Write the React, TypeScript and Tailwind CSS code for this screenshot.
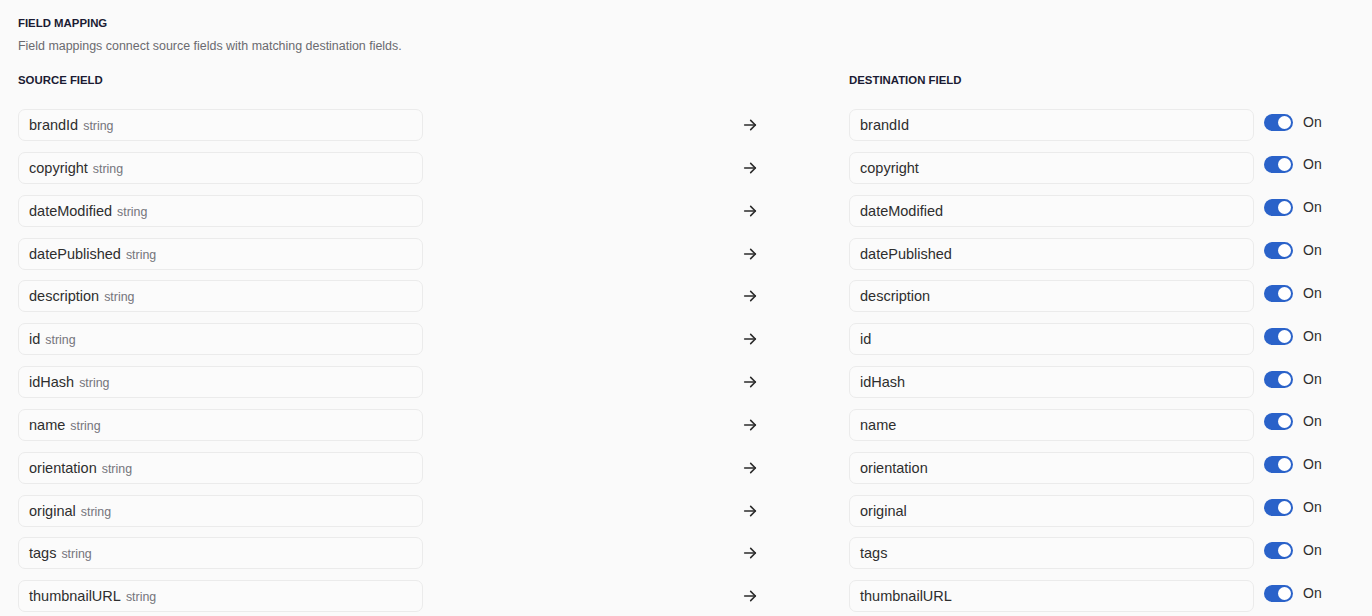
import React from "react";

const fields = [
  "brandId",
  "copyright",
  "dateModified",
  "datePublished",
  "description",
  "id",
  "idHash",
  "name",
  "orientation",
  "original",
  "tags",
  "thumbnailURL",
];

function Arrow() {
  return (
    <svg width="16" height="16" viewBox="0 0 24 24" fill="none" stroke="#2b2b2b" strokeWidth="2.4" strokeLinecap="round" strokeLinejoin="round">
      <path d="M4 12h16" />
      <path d="M13 5l7 7-7 7" />
    </svg>
  );
}

function Toggle() {
  return (
    <div className="w-[29px] h-[17px] rounded-full bg-[#2a62c9] flex items-center justify-end pr-[2px]">
      <div className="w-[13px] h-[13px] rounded-full bg-white" />
    </div>
  );
}

export default function App() {
  return (
    <div
      className="min-h-[616px] bg-[#fafafa] px-[18px] pt-[17px] text-[#2b2b2b]"
      style={{ fontFamily: '"Liberation Sans", Arial, sans-serif' }}
    >
      <div className="text-[11.4px] leading-[13px] font-bold text-[#1b1b33]">FIELD MAPPING</div>
      <div className="mt-[9px] text-[12.45px] leading-[14px] text-[#6a6a70]">
        Field mappings connect source fields with matching destination fields.
      </div>
      <div className="mt-[21px] flex text-[11.4px] leading-[13px] font-bold text-[#1b1b33]">
        <div className="w-[405px]">SOURCE FIELD</div>
        <div className="ml-[426px]">DESTINATION FIELD</div>
      </div>
      <div className="mt-[22px] flex flex-col gap-[10.85px]">
        {fields.map((f) => (
          <div key={f} className="flex items-center h-[32px]">
            <div className="w-[405px] h-full rounded-[7px] border border-[#ebebeb] bg-[#fbfbfb] flex items-baseline pt-[7px] px-[10px]">
              <span className="text-[14.5px] leading-[17px] text-[#2e2e2e]">{f}</span>
              <span className="ml-[5px] text-[12.4px] leading-[17px] text-[#75757c]">string</span>
            </div>
            <div className="w-[426px] flex">
              <div className="ml-[319px] flex items-center">
                <Arrow />
              </div>
            </div>
            <div className="w-[405px] h-full rounded-[7px] border border-[#ebebeb] bg-[#fbfbfb] flex items-baseline pt-[7px] px-[10px]">
              <span className="text-[14.5px] leading-[17px] text-[#2e2e2e]">{f}</span>
            </div>
            <div className="ml-[10px] flex items-center -mt-[6px]">
              <Toggle />
              <span className="ml-[10px] text-[14px] text-[#2e2e2e]">On</span>
            </div>
          </div>
        ))}
      </div>
    </div>
  );
}
